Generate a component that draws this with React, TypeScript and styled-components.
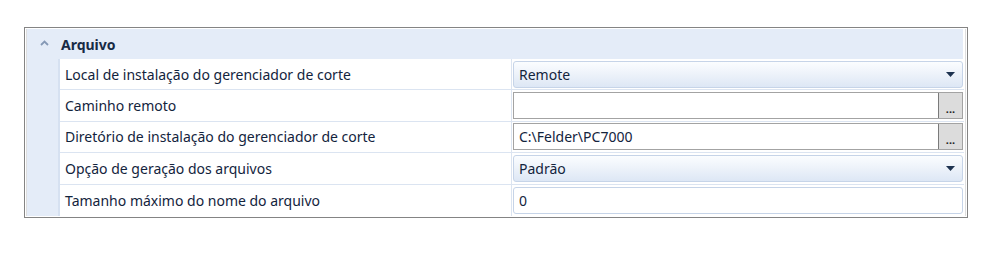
import React from "react";
import styled, { createGlobalStyle } from "styled-components";

const GlobalStyle = createGlobalStyle`
  body {
    margin: 0;
    background: #ffffff;
    font-family: "Noto Sans", "Open Sans", sans-serif;
  }
`;

type Row = {
  label: string;
  kind: "select" | "browse" | "text";
  value: string;
};

const rows: Row[] = [
  { label: "Local de instalação do gerenciador de corte", kind: "select", value: "Remote" },
  { label: "Caminho remoto", kind: "browse", value: "" },
  { label: "Diretório de instalação do gerenciador de corte", kind: "browse", value: "C:\\Felder\\PC7000" },
  { label: "Opção de geração dos arquivos", kind: "select", value: "Padrão" },
  { label: "Tamanho máximo do nome do arquivo", kind: "text", value: "0" },
];

const App = () => {
  return (
    <Page>
      <GlobalStyle />
      <Frame>
        <Inner>
          <Header>
            <Toggle>
              <svg width="9" height="6" viewBox="0 0 9 6">
                <path d="M1 5 L4.5 1.5 L8 5" fill="none" stroke="#8599b6" strokeWidth="1.8" />
              </svg>
            </Toggle>
            <Title>Arquivo</Title>
          </Header>
          <Body>
            <Indent />
            <Grid>
              {rows.map((r) => (
                <PropRow key={r.label}>
                  <Label>{r.label}</Label>
                  <ValueCell>
                    {r.kind === "select" && (
                      <Select>
                        <span>{r.value}</span>
                        <svg width="9" height="5" viewBox="0 0 9 5">
                          <path d="M0 0 H9 L4.5 5 Z" fill="#1e3350" />
                        </svg>
                      </Select>
                    )}
                    {r.kind === "browse" && (
                      <Browse>
                        <span>{r.value}</span>
                        <Dots>...</Dots>
                      </Browse>
                    )}
                    {r.kind === "text" && (
                      <TextBox>
                        <span>{r.value}</span>
                      </TextBox>
                    )}
                  </ValueCell>
                </PropRow>
              ))}
            </Grid>
          </Body>
        </Inner>
      </Frame>
    </Page>
  );
};

export default App;

const Page = styled.div`
  padding: 27px 0 0 24px;
`;

const Frame = styled.div`
  width: 940px;
  border: 1px solid #848484;
  padding: 1px;
  background: #fff;
`;

const Inner = styled.div`
  border-left: 1px solid #dedede;
  border-right: 1px solid #dedede;
  padding-right: 1px;
`;

const Header = styled.div`
  display: flex;
  align-items: center;
  height: 30px;
  background: #e4ecf8;
  margin-right: 1px;
`;

const Toggle = styled.div`
  width: 32px;
  display: flex;
  justify-content: center;
  padding-left: 3px;
  box-sizing: border-box;
  margin-top: -2px;
`;

const Title = styled.div`
  font-weight: bold;
  font-size: 14px;
  color: #172a45;
  margin-left: 2px;
`;

const Body = styled.div`
  display: flex;
`;

const Indent = styled.div`
  width: 31px;
  background: #e4ecf8;
  border-right: 2px solid #d6e1f1;
`;

const Grid = styled.div`
  flex: 1;
  display: flex;
  flex-direction: column;
`;

const PropRow = styled.div`
  display: grid;
  grid-template-columns: 452px 1fr;
  box-sizing: border-box;
  height: 31.4px;
  border-bottom: 1px solid #dbe4f1;
  &:last-child {
    border-bottom: none;
  }
`;

const Label = styled.div`
  display: flex;
  align-items: center;
  padding-left: 5px;
  font-size: 14px;
  color: #13243d;
  border-right: 1px solid #dbe4f1;
`;

const ValueCell = styled.div`
  display: flex;
  align-items: center;
  padding: 0 1px 0 1px;
`;

const Field = styled.div`
  flex: 1;
  height: 27px;
  box-sizing: border-box;
  display: flex;
  align-items: center;
  font-size: 14px;
  color: #13243d;
  & > span {
    flex: 1;
    padding-left: 5px;
  }
`;

const Select = styled(Field)`
  border: 1px solid #c6d4e8;
  border-radius: 3px;
  background: linear-gradient(#fbfdff 0%, #eef3fa 45%, #dde7f5 100%);
  padding-right: 7px;
`;

const Browse = styled(Field)`
  border: 1px solid #a3a3a3;
  background: #fff;
`;

const Dots = styled.div`
  width: 24px;
  height: 25px;
  box-sizing: border-box;
  border-left: 1px solid #7a7a7a;
  background: #dcdcdc;
  font-size: 11px;
  font-weight: bold;
  color: #222;
  display: flex;
  align-items: flex-end;
  justify-content: center;
  padding-bottom: 4px;
  line-height: 1;
`;

const TextBox = styled(Field)`
  border: 1px solid #c6d4e8;
  border-radius: 3px;
  background: #fff;
`;
